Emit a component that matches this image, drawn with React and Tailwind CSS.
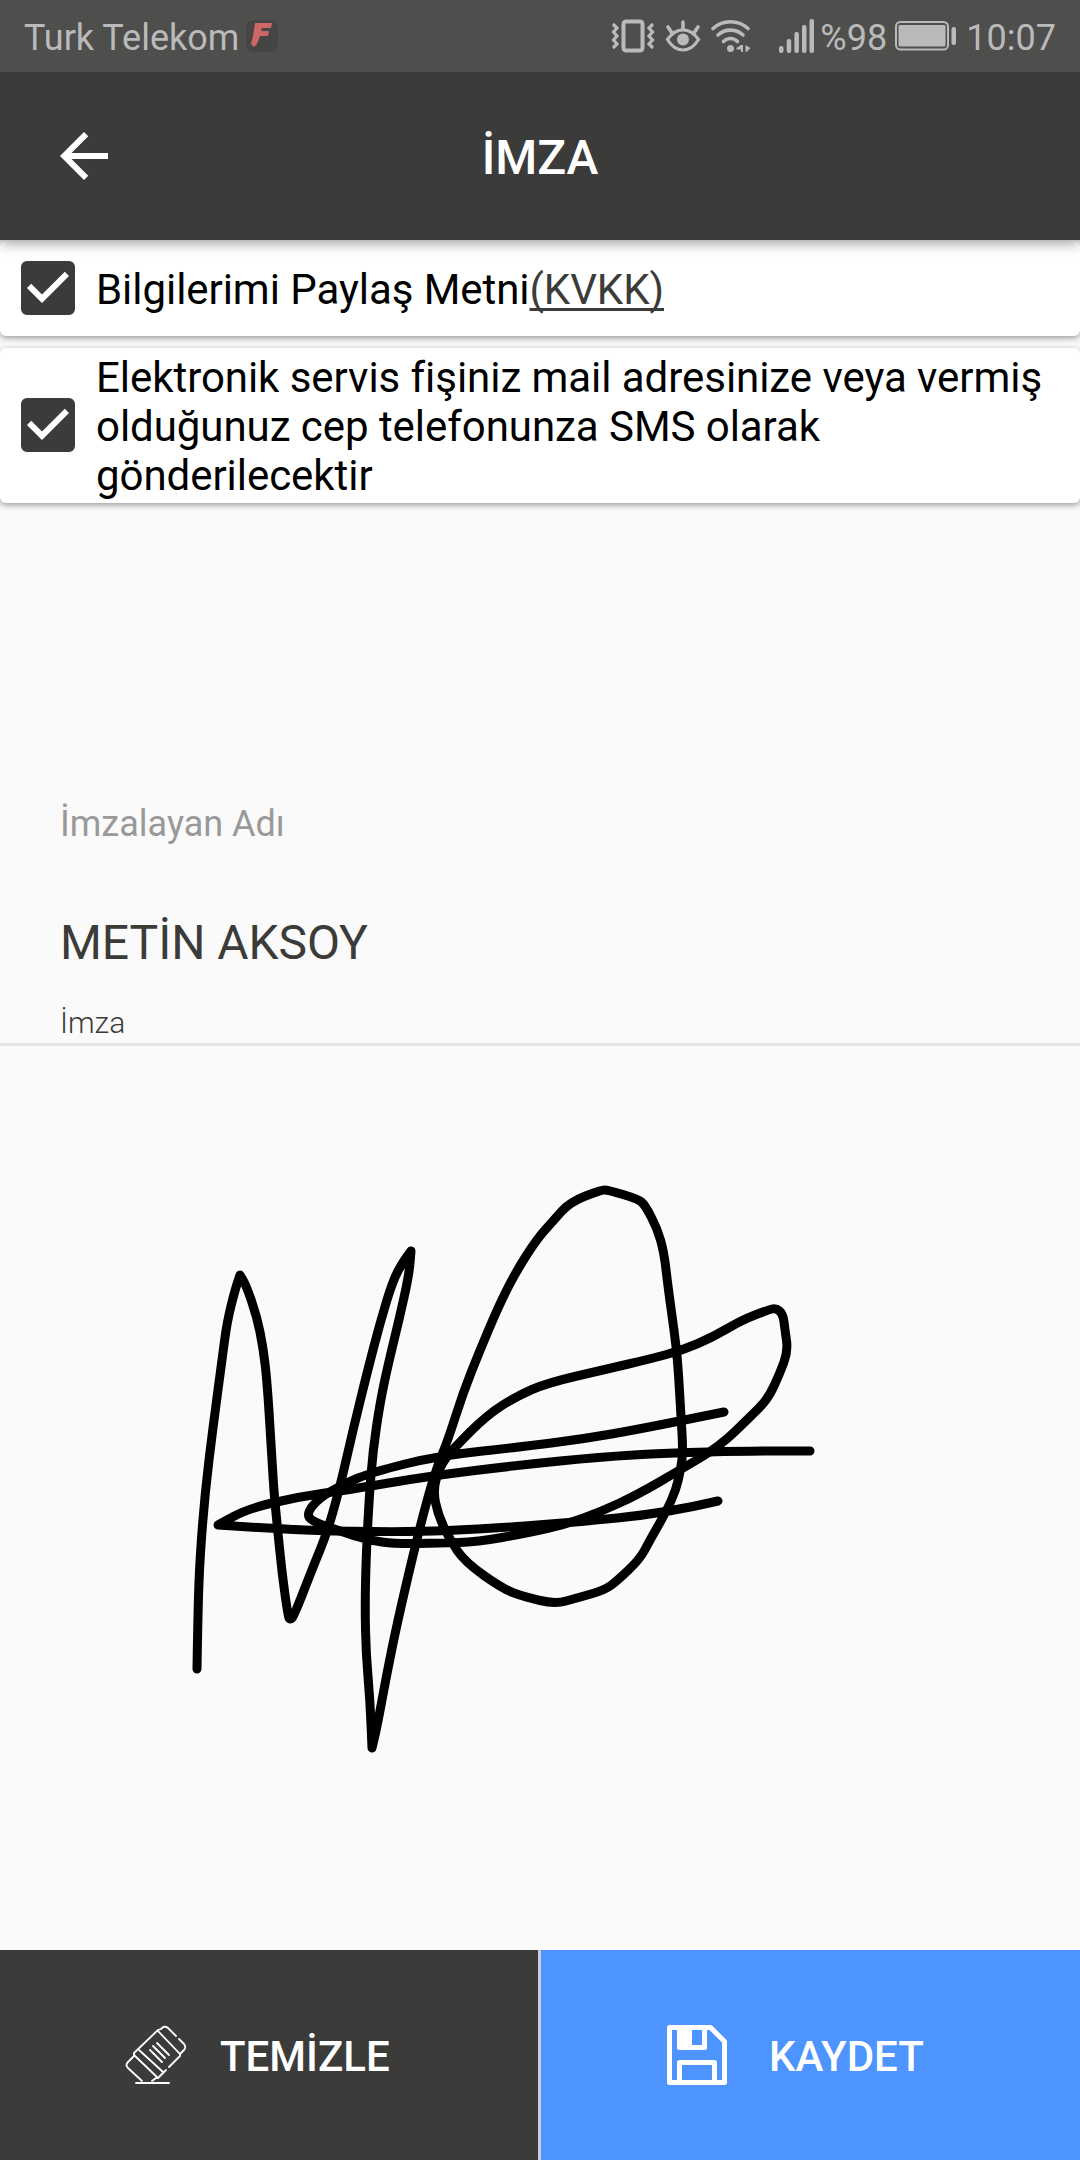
import { MdArrowBack, MdCheckBox } from 'react-icons/md';

// finger strokes captured on the signature pad, a repeated point keeps a corner sharp
const strokes = [
  [
    [197, 1669], [198, 1607], [200, 1557], [205, 1493], [213, 1427], [222, 1360], [227, 1322], [235, 1290],
    [240, 1275], [240, 1275], [246, 1285], [257, 1317], [263, 1347], [267, 1380], [271, 1443], [274, 1493], [277, 1523],
    [282, 1573], [288, 1616], [290, 1620], [294, 1616], [313, 1567], [327, 1533], [340, 1487], [353, 1430], [367, 1373],
    [380, 1323], [393, 1280], [403, 1262], [411, 1251], [411, 1251], [409, 1275], [399, 1320], [388, 1365],
    [380, 1403], [373, 1450], [369, 1500], [366, 1560], [365, 1607], [366, 1653], [370, 1700], [372, 1748], [372, 1748],
    [377, 1727], [387, 1673], [397, 1624], [413, 1555], [427, 1500], [437, 1467], [448, 1440], [463, 1393],
    [480, 1350], [500, 1303], [517, 1270], [537, 1239], [553, 1221], [570, 1202], [601, 1190], [608, 1190],
    [638, 1199], [645, 1205], [657, 1228], [664, 1252], [668, 1287], [675, 1337], [678, 1365], [681, 1417],
    [683, 1450], [681, 1468], [676, 1490], [666, 1512], [650, 1540], [640, 1559], [618, 1580], [605, 1590],
    [577, 1598], [555, 1604], [525, 1597], [503, 1589], [465, 1562], [450, 1540], [438, 1515], [433, 1490],
    [440, 1466], [453, 1449], [487, 1415], [517, 1396], [547, 1383], [607, 1369], [650, 1359], [683, 1350],
    [713, 1337], [742, 1320], [768, 1310], [776, 1308], [783, 1314], [785, 1330], [788, 1351], [780, 1373],
    [768, 1399], [750, 1417], [720, 1446], [680, 1470], [637, 1495], [600, 1512], [567, 1524], [527, 1533],
    [477, 1542], [440, 1543], [397, 1544], [367, 1540], [340, 1531], [311, 1521], [307, 1513], [318, 1499],
    [343, 1484], [373, 1472], [437, 1456], [520, 1447], [583, 1439], [640, 1429], [724, 1412],
  ],
  [
    [718, 1501], [667, 1513], [567, 1523], [483, 1529], [413, 1532], [330, 1531], [280, 1529], [218, 1525],
    [218, 1525], [247, 1509], [297, 1497], [347, 1490], [430, 1476], [520, 1465], [600, 1457], [667, 1453],
    [750, 1451], [810, 1451],
  ],
];

const toPath = (points) => {
  let d = `M${points[0][0]} ${points[0][1]}`;
  for (let i = 1; i < points.length - 1; i++) {
    const [x, y] = points[i];
    const [nx, ny] = points[i + 1];
    d += ` Q${x} ${y} ${(x + nx) / 2} ${(y + ny) / 2}`;
  }
  const last = points[points.length - 1];
  return `${d} L${last[0]} ${last[1]}`;
};

const CarrierBadge = () => (
  <svg width="34" height="34" viewBox="0 0 34 34" className="ml-[6px]">
    <rect x="1" y="1" width="32" height="32" rx="8" fill="#454543" />
    <path d="M10 4h17l-1 5h-9l-1 3h8l-1 5h-8l-3 8-3 3-3-3 2-8z" fill="#cf6666" />
  </svg>
);

const VibrateIcon = () => (
  <svg width="44" height="36" viewBox="0 0 44 36" fill="none" stroke="#bababa" className="shrink-0">
    <rect x="12.5" y="3.5" width="19" height="29" rx="2.5" strokeWidth="4" />
    <path d="M2 6l4 4-3.5 4L6 18l-3.500 4L6 26l-4 4M42 6l-4 4 3.500 4L38 18l3.500 4L38 26l4 4" strokeWidth="3.200" />
  </svg>
);

const EyeIcon = () => (
  <svg width="36" height="36" viewBox="0 0 36 36" fill="none" stroke="#bababa" strokeLinecap="round" className="ml-[10px] shrink-0">
    <path d="M2.500 21.500C7 15 12 11.800 18 11.800S29 15 33.500 21.500C29 29 24 32 18 32S7 29 2.500 21.500z" strokeWidth="3.200" />
    <path d="M18 4v7M3 9l4 6M33 9l-4 6" strokeWidth="3.600" />
    <circle cx="18" cy="21.500" r="6" fill="#bababa" stroke="none" />
  </svg>
);

const WifiIcon = () => (
  <svg width="42" height="36" viewBox="0 0 42 36" fill="none" stroke="#bababa" strokeLinecap="round" className="ml-[9px] shrink-0">
    <path d="M3 10.500C13 1.500 28 1.500 38 10.500" strokeWidth="3.600" />
    <path d="M8 17C15 10.500 26 10.500 33 17" strokeWidth="3.600" />
    <path d="M13.500 23.500c4-4 10-4 14 0" strokeWidth="3.600" />
    <circle cx="20.500" cy="30.500" r="3.500" fill="#bababa" stroke="none" />
    <path d="M33 27v7h-2v-2.500h-4.500v-1.500L31 27zM35.500 34v-7l5 3-4 4z" fill="#bababa" stroke="none" />
  </svg>
);

const SignalIcon = () => (
  <svg width="36" height="36" viewBox="0 0 36 36" fill="#bababa" className="ml-[27px] shrink-0">
    <rect x="0" y="28" width="4.500" height="7" rx="2" />
    <rect x="7.700" y="21" width="4.500" height="14" rx="2" />
    <rect x="15.400" y="14" width="4.500" height="21" rx="2" />
    <rect x="23" y="7" width="4.500" height="28" rx="2" />
    <rect x="30.500" y="1" width="4.500" height="34" rx="2" />
  </svg>
);

const BatteryIcon = () => (
  <svg width="62" height="30" viewBox="0 0 62 30" className="shrink-0">
    <rect x="1" y="1" width="52" height="27.500" rx="4.500" fill="none" stroke="#bababa" strokeWidth="2" />
    <rect x="3.500" y="4" width="47" height="21.500" rx="1.500" fill="#bababa" />
    <rect x="56.500" y="6" width="4.500" height="18" rx="2" fill="#bababa" />
  </svg>
);

const EraserIcon = () => (
  <svg width="62" height="60" viewBox="0 0 62 60" fill="none" stroke="#fff" strokeWidth="1.800" strokeLinecap="round" strokeLinejoin="round">
    <path d="M17 56L3 43q-3-3 0-6l6-6v-3L33 5l3-1 1-1q3-2.500 6 0l8 8M54 14l5 5q2.500 3 0 6l-4 4v2L44 42M41 45L33 53h-2l-4 3" />
    <path d="M11 58h33M9 30l24 23M14 25l24 22M33 6l22 23" />
    <path d="M25 25l12 12M28 21l12 12M32 18l12 12" />
  </svg>
);

const SaveIcon = () => (
  <svg width="60" height="60" viewBox="0 0 60 60" fill="none" stroke="#fff" strokeWidth="5" strokeLinejoin="round">
    <path d="M2.500 2.500h41l14 14v41h-55z" />
    <path d="M12.500 2.500v20h25v-20" />
    <path d="M12.500 57.500v-20h35v20" />
    <path d="M12 3h13v19H12z" fill="#fff" stroke="none" />
  </svg>
);

const StatusBar = () => (
  <div className="relative z-20 flex h-[72px] items-center justify-between bg-[#4e4e4c] px-6 text-[36px] leading-[42px] text-[#bababa]">
    <div className="flex items-center">
      <span className="pt-[3px]">Turk Telekom</span>
      <CarrierBadge />
    </div>
    <div className="flex items-center">
      <VibrateIcon />
      <EyeIcon />
      <WifiIcon />
      <SignalIcon />
      <span className="ml-[5px] w-[75px] pt-[3px]">%98</span>
      <BatteryIcon />
      <span className="ml-[9px] pt-[3px]">10:07</span>
    </div>
  </div>
);

const Header = () => (
  <header className="relative z-10 grid h-[168px] grid-cols-[1fr_auto_1fr] items-center bg-[#3b3b39] px-12 text-white shadow-[0_3px_12px_rgba(0,0,0,0.4)]">
    <button className="w-[72px]">
      <MdArrowBack size={72} />
    </button>
    <h1 className="pt-[3px] text-[48px] font-medium leading-[56px]">İMZA</h1>
  </header>
);

const ConsentRow = ({ className, children }) => (
  <label className={`flex items-center rounded-[6px] bg-white pl-3 shadow-[0_2px_6px_rgba(0,0,0,0.4)] ${className}`}>
    <MdCheckBox size={72} className="shrink-0 text-[#3b3b39]" />
    <span className="ml-3 pt-[3px] text-[42px] leading-[49px] tracking-[-0.05px] text-black">{children}</span>
  </label>
);

const App = () => {
  return (
    <div className="flex h-[2160px] w-[1080px] flex-col bg-[#fafafa] font-['Roboto',sans-serif]">
      <StatusBar />
      <Header />

      <div className="flex flex-col gap-3">
        <ConsentRow className="h-[96px]">
          Bilgilerimi Paylaş Metni
          <a className="text-[#3b3b39] underline decoration-[3px] underline-offset-[4px] [text-decoration-skip-ink:none]">(KVKK)</a>
        </ConsentRow>
        <ConsentRow className="h-[155px] pb-px">
          Elektronik servis fişiniz mail adresinize veya vermiş
          <br />
          olduğunuz cep telefonunza SMS olarak
          <br />
          gönderilecektir
        </ConsentRow>
      </div>

      <div className="flex h-[543px] flex-col border-b-[3px] border-[#e5e5e5] px-[60px] pt-[300px]">
        <span className="text-[36px] leading-[42px] text-[#999]">İmzalayan Adı</span>
        <span className="mt-[70px] text-[48px] leading-[56px] tracking-[-0.05px] text-[#3b3b39]">METİN AKSOY</span>
        <span className="mt-[34px] text-[30px] font-light leading-[36px] text-[#3b3b39]">İmza</span>
      </div>

      <div className="h-[904px]">
        <svg width="1080" height="904" viewBox="0 1046 1080 904" fill="none" stroke="#000" strokeWidth="9" strokeLinecap="round" strokeLinejoin="round">
          {strokes.map((points, i) => (
            <path key={i} d={toPath(points)} />
          ))}
        </svg>
      </div>

      <footer className="flex h-[210px] text-[42px] font-medium leading-[50px] text-white">
        <button className="flex w-[538px] items-center bg-[#3b3b39] pl-[125px]">
          <EraserIcon />
          <span className="ml-[33px] pt-[3px]">TEMİZLE</span>
        </button>
        <div className="w-[3px] bg-[#c8cdd8]" />
        <button className="flex flex-1 items-center bg-[#4d94ff] pl-[126px]">
          <SaveIcon />
          <span className="ml-[42px] pt-[3px]">KAYDET</span>
        </button>
      </footer>
    </div>
  );
};

export default App;
